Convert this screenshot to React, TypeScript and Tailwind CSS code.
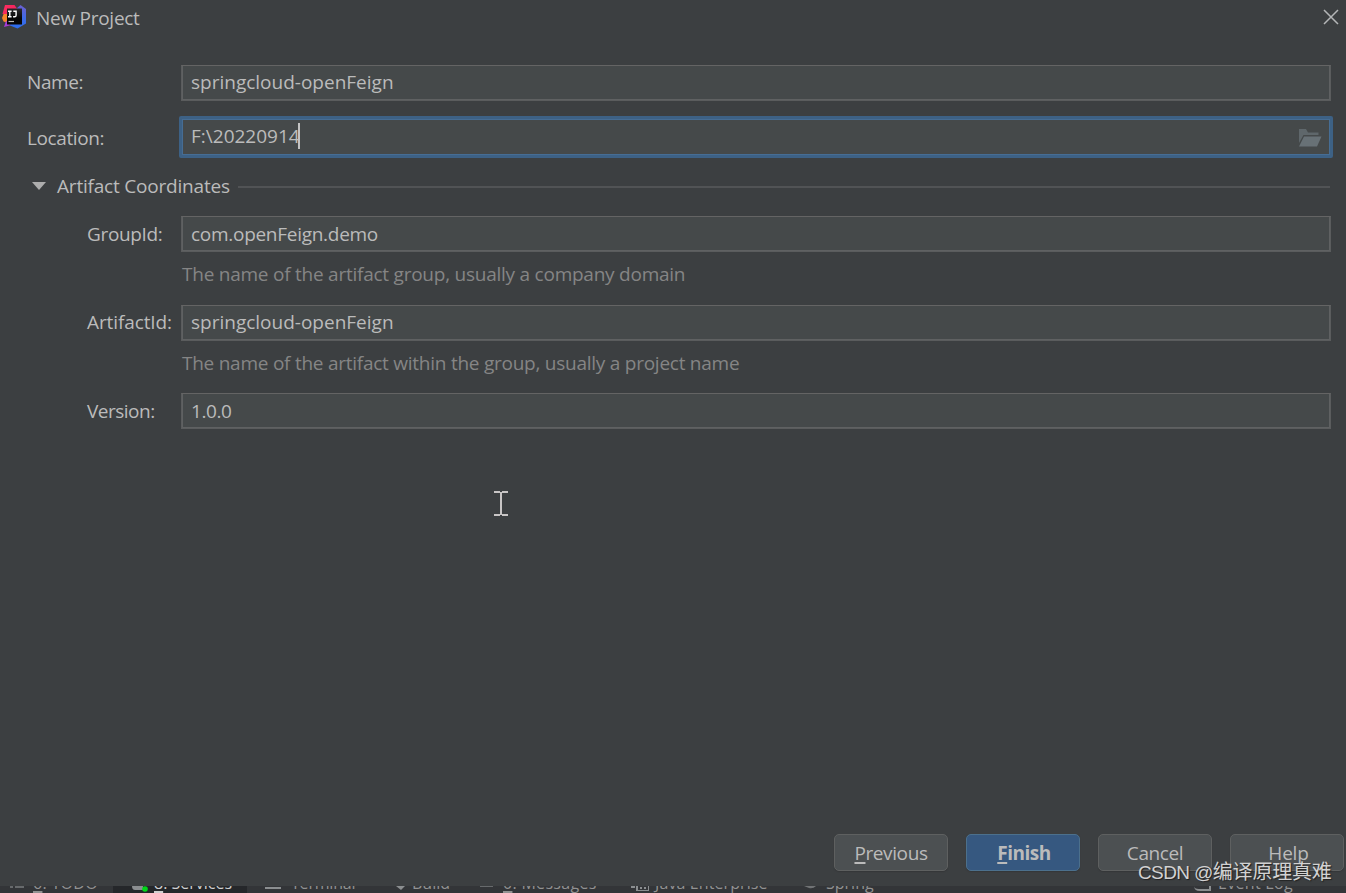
import React from "react";

function IdeaLogo() {
  return (
    <svg width="25" height="25" viewBox="0 0 25 25" className="ml-[2px] mt-[1px] shrink-0">
      <defs>
        <linearGradient id="blue" x1="0.7" y1="0" x2="0.5" y2="1">
          <stop offset="0" stopColor="#6b5fd0" />
          <stop offset="0.5" stopColor="#3f6be6" />
          <stop offset="1" stopColor="#2b6df0" />
        </linearGradient>
        <linearGradient id="pink" x1="0" y1="0" x2="1" y2="0.3">
          <stop offset="0" stopColor="#fb2f5f" />
          <stop offset="1" stopColor="#f3235f" />
        </linearGradient>
        <linearGradient id="tile" x1="0" y1="0" x2="0" y2="1">
          <stop offset="0" stopColor="#2a2a2c" />
          <stop offset="0.6" stopColor="#060607" />
        </linearGradient>
      </defs>
      <path d="M2 9 L0 14 L1.5 17.5 L6 19 L7 8 Z" fill="#f58529" />
      <path d="M4 17 L2 23 L13 20 Z" fill="#a63bd6" />
      <path d="M14 5 L18.5 1 L24 5 V19.5 L15.5 24.5 L8 21.5 Z" fill="url(#blue)" />
      <path d="M3 1 L12.5 1 L16 6 L8 10 L0.5 10 Z" fill="url(#pink)" />
      <rect x="5" y="4.5" width="15" height="16" fill="url(#tile)" />
      <path d="M6 7.2 h3.6 M7.8 7.2 v5.6 M6 12.8 h3.6 M11.3 7.2 h2.8 v4 q0 1.6 -1.5 1.6 h-1.5" stroke="#fff" strokeWidth="1.4" fill="none" />
      <path d="M6.5 17.5 h5.5" stroke="#b8b8b8" strokeWidth="1.2" />
    </svg>
  );
}

function Field({ children, className }: { children: React.ReactNode; className?: string }) {
  return (
    <div className={`flex h-9 w-[1150px] items-center border border-[#5a5c5d] border-t-[#646464] bg-[#45494a] pl-[9px] shadow-[inset_1px_0_#5f6162,inset_-1px_-1px_#5f6162] ${className ?? ""}`}>
      {children}
    </div>
  );
}

function Button({ children, primary }: { children: React.ReactNode; primary?: boolean }) {
  return (
    <div
      className={
        primary
          ? "flex h-[37px] w-[114px] items-center justify-center rounded-[5px] border-[1.5px] border-[#4c708c] bg-[#365880] pl-[2px] font-bold tracking-[-0.5px] shadow-[0_1px_1px_#353739]"
          : "flex h-[37px] w-[114px] items-center justify-center rounded-[5px] border-[1.5px] border-[#5e6060] bg-[#4c5052] tracking-[-0.4px] shadow-[0_1px_1px_#353739]"
      }
    >
      {children}
    </div>
  );
}

function Mnemonic({ children }: { children: string }) {
  return <span className="underline decoration-2 underline-offset-[2px] [text-decoration-skip-ink:none]">{children}</span>;
}

function StatusBar() {
  return (
    <div className="relative h-[7px] overflow-hidden bg-[#333538] text-[16px] leading-[20px] text-[#929292]">
      <div className="absolute left-[113px] top-0 h-[7px] w-[134px] bg-[#25272a]" />
      <svg className="absolute left-0 top-0" width="1346" height="7" viewBox="0 0 1346 7">
        <g fill="#8b8e90">
          <path d="M10 0h3v2h-3z M15 0h9v2h-9z" opacity=".6" />
          <path d="M132 0h11v4h-8q-3 0-3-4z" />
          <path d="M265 1h16v2h-16z" />
          <path d="M396 0h9l-4 4z" />
          <path d="M480 0h13v1h-13z" opacity=".6" />
          <path d="M631 0h4v2h-4z M636 0h2v4h10v-4h1v5h-13z M640 1h2v2h-2z M644 1h2v2h-2z" />
          <path d="M804 0h12q-3 3-7 2z" opacity=".7" />
          <path d="M1194 0q0 3 5 3h10v-3h2v5h-11q-6 0-6-5z" />
        </g>
        <circle cx="145" cy="3" r="2.8" fill="#00d619" />
      </svg>
      <span className="absolute left-[33px] top-[-13px] whitespace-nowrap tracking-[0.3px]"><Mnemonic>6</Mnemonic>: TODO</span>
      <span className="absolute left-[154px] top-[-13px] whitespace-nowrap text-[#d0d0d0]"><Mnemonic>8</Mnemonic>: Services</span>
      <span className="absolute left-[291px] top-[-13px] tracking-[-0.2px]">Terminal</span>
      <span className="absolute left-[412px] top-[-13px]">Build</span>
      <span className="absolute left-[503px] top-[-13px] whitespace-nowrap tracking-[0.3px]"><Mnemonic>0</Mnemonic>: Messages</span>
      <span className="absolute left-[655px] top-[-13px] whitespace-nowrap tracking-[0.1px]">Java Enterprise</span>
      <span className="absolute left-[826px] top-[-13px]">Spring</span>
      <span className="absolute left-[1218px] top-[-13px] whitespace-nowrap tracking-[0.3px]">Event Log</span>
    </div>
  );
}

export default function App() {
  return (
    <div className="relative flex h-[893px] w-[1346px] flex-col overflow-hidden bg-[#3c3f41] font-['Open_Sans','Noto_Sans_CJK_SC',sans-serif] text-[19px] leading-[26px] text-[#bbbbbb]">
      <header className="flex h-9 items-start">
        <div className="mt-[3px]"><IdeaLogo /></div>
        <h1 className="ml-[9px] mt-[5px] tracking-[-0.27px]">New Project</h1>
        <svg className="ml-auto mr-[7px] mt-[9px]" width="16" height="16" viewBox="0 0 16 16">
          <path d="M1 1 L15 15 M15 1 L1 15" stroke="#b4b6b7" strokeWidth="1.5" />
        </svg>
      </header>

      <main className="flex grow flex-col">
        <div className="mt-[29px] flex h-9 items-center">
          <label className="w-[181px] pb-[2px] pl-[27px] tracking-[-0.4px]">Name:</label>
          <Field className="pb-[2px]">springcloud-openFeign</Field>
        </div>

        <div className="mt-[15px] flex h-[42px] items-center">
          <label className="w-[179px] pl-[27px] pt-[2px] tracking-[-0.4px]">Location:</label>
          <div className="flex h-[42px] w-[1154px] items-center rounded-[2px] border-[3px] border-[#3d6185] bg-[#45494a] pl-[9px] pr-[8px] shadow-[inset_0_0_0_1px_#466d94]">
            <span className="-mt-[2px]">F:\20220914</span>
            <span className="-ml-[2px] -mt-[2px] h-[26px] w-[2px] bg-[#c3c3c3]" />
            <svg className="ml-auto mt-[1px]" width="24" height="18" viewBox="0 0 24 18">
              <path d="M1 0 H8 L10 3.5 H20.5 V6 H5.5 L1 14 Z" fill="#5f676b" />
              <path d="M6 7.5 H23.5 L19 17.5 H1 Z" fill="#687176" />
            </svg>
          </div>
        </div>

        <div className="mt-[15px] flex h-[26px] items-center">
          <svg className="ml-[32px]" width="14" height="8" viewBox="0 0 14 8">
            <path d="M0 0 H14 L7 8 Z" fill="#adadad" />
          </svg>
          <span className="ml-[11px] tracking-[-0.2px]">Artifact Coordinates</span>
          <div className="ml-[8px] mr-[16px] mt-[2px] h-[2px] grow bg-[#515355]" />
        </div>

        <div className="mt-[17px] flex h-9 items-center">
          <label className="w-[181px] pl-[87px] tracking-[-0.35px]">GroupId:</label>
          <Field className="tracking-[-0.28px]">com.openFeign.demo</Field>
        </div>
        <p className="mt-[9px] h-[26px] pl-[182px] tracking-[-0.24px] text-[#858585]">The name of the artifact group, usually a company domain</p>

        <div className="mt-[18px] flex h-9 items-center">
          <label className="w-[181px] pb-[2px] pl-[87px] tracking-[-0.1px]">ArtifactId:</label>
          <Field className="pb-[2px]">springcloud-openFeign</Field>
        </div>
        <p className="mt-[9px] h-[26px] pl-[182px] tracking-[-0.25px] text-[#858585]">The name of the artifact within the group, usually a project name</p>

        <div className="mt-[17px] flex h-9 items-center">
          <label className="w-[181px] pl-[87px] tracking-[-0.5px]">Version:</label>
          <Field className="tracking-[-0.4px]">1.0.0</Field>
        </div>
      </main>

      <footer className="mb-[15px] flex justify-end gap-[18px] pr-[2px]">
        <Button><span><Mnemonic>P</Mnemonic>revious</span></Button>
        <Button primary><span><Mnemonic>F</Mnemonic>inish</span></Button>
        <Button>Cancel</Button>
        <Button><span className="pl-[3px] tracking-[-0.2px]">Help</span></Button>
      </footer>
      <StatusBar />

      <svg className="absolute left-[494px] top-[491px]" width="14" height="26" viewBox="0 0 14 26">
        <path d="M0 0H6V1H8V0H14V2H8V23H14V25H8V24H6V25H0V23H6V2H0Z" fill="#c8c5c5" />
      </svg>
      <div className="absolute left-[1138px] top-[859px] whitespace-nowrap font-['Liberation_Sans','Noto_Sans_CJK_SC',sans-serif] text-[20px] leading-[26px] text-[#d2d2d2] [text-shadow:1px_1px_1px_#222]">
        <span className="text-[19px] tracking-[-0.6px]">CSDN @</span><span className="tracking-[-0.2px]">编译原理真难</span>
      </div>
    </div>
  );
}
